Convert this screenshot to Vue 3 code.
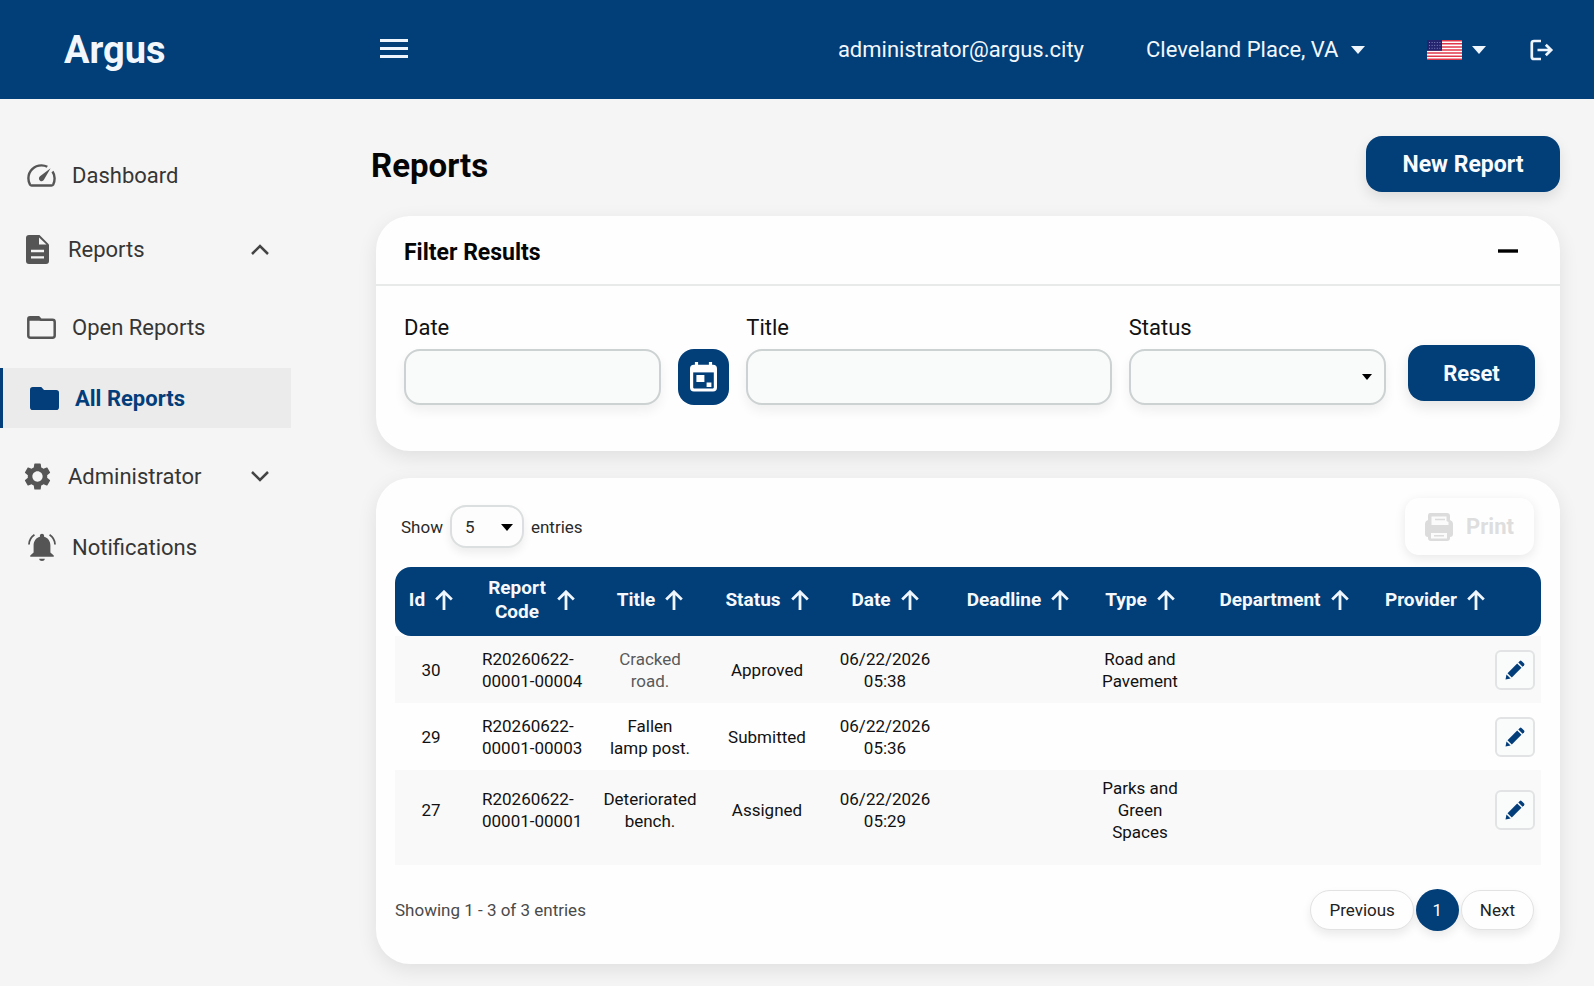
<template>
    <div class="page">
        <!-- HEADER -->
        <header class="header">
            <a class="logo" href="#">Argus</a>
            <button class="iconButton" type="button" aria-label="Toggle menu" v-on:click="menuOpen = !menuOpen">
                <svg width="28" height="21" viewBox="0 0 28 21">
                    <path d="M0 1.5H28M0 9.5H28M0 17.5H28" stroke="#eef5fd" stroke-width="3" />
                </svg>
            </button>
            <div class="headerRight">
                <span class="email">administrator@argus.city</span>
                <div class="location">
                    <select v-model="city" class="citySelect" aria-label="City">
                        <option>Cleveland Place, VA</option>
                    </select>
                    <svg width="14" height="8" viewBox="0 0 14 8"><path d="M0 0H14L7 8Z" fill="#eef5fd" /></svg>
                </div>
                <button class="iconButton language" type="button" aria-label="Language">
                    <svg width="35" height="20" viewBox="0 0 35 20">
                        <rect width="35" height="20" fill="#fff" />
                        <path v-for="n in 7" :key="n" :d="`M0 ${(n - 1) * 3.08 + 0.77}H35`" stroke="#e0364a" stroke-width="1.54" />
                        <rect width="15" height="10.8" fill="#24246e" />
                        <path d="M2 2.5H14M2 5.4H14M2 8.3H14" stroke="#7f86c0" stroke-width="1" stroke-dasharray="1 1.6" />
                    </svg>
                    <svg width="14" height="8" viewBox="0 0 14 8"><path d="M0 0H14L7 8Z" fill="#eef5fd" /></svg>
                </button>
                <button class="iconButton logout" type="button" aria-label="Log out">
                    <svg width="24" height="22" viewBox="0 0 24 22" fill="none" stroke="#eef5fd" stroke-width="2.7">
                        <path d="M11 2H4Q1.8 2 1.8 4V18Q1.8 20 4 20H11" />
                        <path d="M7.5 11H21M15.8 5.7L21.2 11L15.8 16.3" />
                    </svg>
                </button>
            </div>
        </header>

        <div class="body">
            <!-- SIDEBAR -->
            <nav class="sidebar" v-show="menuOpen">
                <a class="navItem first" href="#">
                    <span class="navIcon">
                        <svg width="29" height="23" viewBox="0 0 29 23">
                            <path d="M20.3 2.8C18.5 1.8 16.6 1.4 14.5 1.4C7.2 1.4 1.4 7 1.4 14.2C1.4 16.8 2 19 3 20.6Q3.6 21.5 4.6 21.5H24.4Q25.6 21.5 26.2 20.6C27.1 19 27.6 16.8 27.6 14.2C27.6 11.6 26.8 9.4 25.5 7.5" fill="none" stroke="#555" stroke-width="2.4" />
                            <path d="M23.6 4.2L17.2 15.3A2.7 2.7 0 1 1 13 12.3Z" fill="#555" />
                        </svg>
                    </span>
                    Dashboard
                </a>
                <button class="navItem group" type="button" v-on:click="reportsOpen = !reportsOpen">
                    <span class="navIcon">
                        <svg width="23" height="29" viewBox="0 0 23 29">
                            <path d="M3 0H13.5L23 9.5V26Q23 29 20 29H3Q0 29 0 26V3Q0 0 3 0Z" fill="#555" />
                            <path d="M13 2.5V9.5H20.5Z" fill="#f5f5f5" />
                            <path d="M5 16H18M5 22.3H18" stroke="#f5f5f5" stroke-width="2.3" />
                        </svg>
                    </span>
                    Reports
                    <svg class="chevron" width="18" height="11" viewBox="0 0 18 11">
                        <path d="M1 10L9 2L17 10" fill="none" stroke="#444" stroke-width="2.5" />
                    </svg>
                </button>
                <div class="submenu" v-if="reportsOpen">
                    <a class="navItem" href="#">
                        <span class="navIcon">
                            <svg width="29" height="23" viewBox="0 0 29 23">
                                <path d="M1.3 3V19.5Q1.3 21.7 3.5 21.7H25.5Q27.7 21.7 27.7 19.5V6Q27.7 3.8 25.5 3.8H14L11.6 1.3H3Q1.3 1.3 1.3 3Z" fill="none" stroke="#555" stroke-width="2.5" />
                                <path d="M1.5 1.5H11.5L14 4.8H1.5Z" fill="#555" />
                            </svg>
                        </span>
                        Open Reports
                    </a>
                    <a class="navItem active" href="#">
                        <span class="navIcon">
                            <svg width="29" height="23" viewBox="0 0 29 23">
                                <path d="M2.8 0H11.3L14 2.9H26.2Q29 2.9 29 5.7V20.2Q29 23 26.2 23H2.8Q0 23 0 20.2V2.8Q0 0 2.8 0Z" fill="#033e7b" />
                            </svg>
                        </span>
                        All Reports
                    </a>
                </div>
                <button class="navItem group" type="button">
                    <span class="navIcon">
                        <svg width="27" height="27" viewBox="2 2 20 20">
                            <path fill="#555" d="M19.14 12.94c.04-.3.06-.61.06-.94 0-.32-.02-.64-.07-.94l2.03-1.58c.18-.14.23-.41.12-.61l-1.92-3.32c-.12-.22-.37-.29-.59-.22l-2.39.96c-.5-.38-1.03-.7-1.62-.94l-.36-2.54c-.04-.24-.24-.41-.48-.41h-3.84c-.24 0-.43.17-.47.41l-.36 2.54c-.59.24-1.13.57-1.62.94l-2.39-.96c-.22-.08-.47 0-.59.22L2.74 8.87c-.12.21-.08.47.12.61l2.03 1.58c-.05.3-.09.63-.09.94s.02.64.07.94l-2.03 1.58c-.18.14-.23.41-.12.61l1.92 3.32c.12.22.37.29.59.22l2.39-.96c.5.38 1.03.7 1.62.94l.36 2.54c.05.24.24.41.48.41h3.84c.24 0 .44-.17.47-.41l.36-2.54c.59-.24 1.13-.56 1.62-.94l2.39.96c.22.08.47 0 .59-.22l1.92-3.32c.12-.22.07-.47-.12-.61l-2.01-1.58zM12 15.8c-2.1 0-3.8-1.7-3.8-3.8s1.7-3.8 3.8-3.8 3.8 1.7 3.8 3.8-1.7 3.8-3.8 3.8z" />
                        </svg>
                    </span>
                    Administrator
                    <svg class="chevron" width="18" height="11" viewBox="0 0 18 11">
                        <path d="M1 1L9 9L17 1" fill="none" stroke="#444" stroke-width="2.5" />
                    </svg>
                </button>
                <a class="navItem" href="#">
                    <span class="navIcon">
                        <svg width="28" height="28" viewBox="2 2 20 20">
                            <path fill="#555" d="M12 22c1.1 0 2-.6 2-1.6h-4c0 1 .9 1.6 2 1.6zm6-6v-5c0-3.07-1.64-5.64-4.5-6.32V4c0-.83-.67-1.5-1.5-1.5s-1.5.67-1.5 1.5v.68C7.63 5.36 6 7.92 6 11v5l-2.4 2v1h16.8v-1l-2.4-2z" />
                            <path fill="none" stroke="#555" stroke-width="1.3" d="M6.6 3.3C4.2 4.9 2.8 7 2.7 10.2M17.4 3.3C19.8 4.9 21.2 7 21.3 10.2" />
                        </svg>
                    </span>
                    Notifications
                </a>
            </nav>

            <main class="main">
                <div class="titleRow">
                    <h1>Reports</h1>
                    <button class="primary newReport" type="button">New Report</button>
                </div>

                <div class="cards">
                    <!-- FILTERS -->
                    <section class="card">
                        <div class="filterHeader">
                            <h2>Filter Results</h2>
                            <button class="iconButton" type="button" aria-label="Collapse" v-on:click="filtersOpen = !filtersOpen">
                                <svg width="20" height="20" viewBox="0 0 20 20"><path d="M0 10H20" stroke="#000" stroke-width="3.4" /></svg>
                            </button>
                        </div>
                        <form class="filters" v-if="filtersOpen" v-on:submit.prevent v-on:reset="resetFilters">
                            <div class="field dateField">
                                <label for="date">Date</label>
                                <input id="date" v-model="date" type="text">
                            </div>
                            <button class="primary calendar" type="button" aria-label="Pick a date">
                                <svg width="27" height="30" viewBox="0 0 27 30">
                                    <path d="M6.5 0V5M20.5 0V5" stroke="#fff" stroke-width="3.2" />
                                    <rect x="1.6" y="4.4" width="23.8" height="23.6" rx="2.4" fill="none" stroke="#fff" stroke-width="3.2" />
                                    <path d="M2 3.6H25V10.4H2Z" fill="#fff" />
                                    <path d="M6.4 13H14.4V20H6.4ZM16.6 20.6H21.4V25H16.6Z" fill="#fff" />
                                </svg>
                            </button>
                            <div class="field titleField">
                                <label for="title">Title</label>
                                <input id="title" v-model="title" type="text">
                            </div>
                            <div class="field statusField">
                                <label for="status">Status</label>
                                <div class="selectBox">
                                    <select id="status" v-model="status">
                                        <option value=""></option>
                                        <option>Approved</option>
                                        <option>Submitted</option>
                                        <option>Assigned</option>
                                    </select>
                                    <svg class="caret" width="10" height="6" viewBox="0 0 10 6"><path d="M0 0H10L5 6Z" /></svg>
                                </div>
                            </div>
                            <button class="primary reset" type="reset">Reset</button>
                        </form>
                    </section>

                    <!-- TABLE -->
                    <section class="card tableCard">
                        <div class="tools">
                            <label for="entries">Show</label>
                            <div class="selectBox">
                                <select id="entries" v-model="perPage" class="entries">
                                    <option>5</option>
                                    <option>10</option>
                                    <option>25</option>
                                </select>
                                <svg class="caret" width="12" height="7" viewBox="0 0 12 7"><path d="M0 0H12L6 7Z" /></svg>
                            </div>
                            <span>entries</span>
                            <button class="print" type="button" disabled>
                                <svg width="28" height="28" viewBox="0 0 28 28">
                                    <path d="M5 0H22Q25 0 25 3V7Q28 8 28 11V21Q28 24 25 24V25Q25 28 22 28H6Q3 28 3 25V24Q0 24 0 21V11Q0 8 3 7V3Q3 0 5 0Z" fill="#dcdcdc" />
                                    <path d="M6.5 3.5H21.5V8L23.5 9V12H6.5ZM6 20H22V25.5H6Z" fill="#fbfbfb" />
                                    <path d="M10 6.5H20M9 22.7H19" stroke="#dcdcdc" stroke-width="1.6" />
                                </svg>
                                Print
                            </button>
                        </div>

                        <table>
                            <colgroup>
                                <col v-for="col in columns" :key="col.key" :class="'col-' + col.key">
                                <col class="col-edit">
                            </colgroup>
                            <thead>
                                <tr>
                                    <th v-for="col in columns" :key="col.key">
                                        <button class="sort" type="button" v-on:click="sortBy(col.key)">
                                            <span>{{ col.label }}</span>
                                            <svg width="18" height="20" viewBox="0 0 18 20">
                                                <path d="M9 20V1.8M1.2 9.4L9 1.8L16.8 9.4" fill="none" stroke="#f0f6fd" stroke-width="2.8" />
                                            </svg>
                                        </button>
                                    </th>
                                    <th></th>
                                </tr>
                            </thead>
                            <tbody>
                                <tr v-for="report in reports" :key="report.id">
                                    <td>{{ report.id }}</td>
                                    <td class="code">{{ report.code }}</td>
                                    <td class="title" :class="{ muted: report.id === 30 }">{{ report.title }}</td>
                                    <td>{{ report.status }}</td>
                                    <td>{{ report.date }}</td>
                                    <td>{{ report.deadline }}</td>
                                    <td>{{ report.type }}</td>
                                    <td>{{ report.department }}</td>
                                    <td>{{ report.provider }}</td>
                                    <td>
                                        <button class="edit" type="button" aria-label="Edit report">
                                            <svg width="20" height="20" viewBox="0 0 20 20" fill="#033e7b">
                                                <path d="M14.8 0.9Q15.6 0.1 16.5 0.9L19.1 3.5Q19.9 4.4 19.1 5.2L17.6 6.7L13.3 2.4Z" />
                                                <path d="M12.2 3.5L16.5 7.8L6.8 17.5L2.5 13.2Z" />
                                                <path d="M1.5 14.4L5.6 18.5L0.5 19.5Z" />
                                            </svg>
                                        </button>
                                    </td>
                                </tr>
                            </tbody>
                        </table>

                        <div class="footer">
                            <span>Showing 1 - {{ reports.length }} of {{ reports.length }} entries</span>
                            <div class="pagination">
                                <button type="button">Previous</button>
                                <button class="current" type="button">1</button>
                                <button type="button">Next</button>
                            </div>
                        </div>
                    </section>
                </div>
            </main>
        </div>
    </div>
</template>


<script setup>
import { ref } from 'vue';

// menus
const menuOpen = ref(true)
const reportsOpen = ref(true)
const filtersOpen = ref(true)

// filters
const city = ref('Cleveland Place, VA')
const date = ref('')
const title = ref('')
const status = ref('')
const perPage = ref('5')

const columns = [
    { key: 'id', label: 'Id' },
    { key: 'code', label: 'Report Code' },
    { key: 'title', label: 'Title' },
    { key: 'status', label: 'Status' },
    { key: 'date', label: 'Date' },
    { key: 'deadline', label: 'Deadline' },
    { key: 'type', label: 'Type' },
    { key: 'department', label: 'Department' },
    { key: 'provider', label: 'Provider' },
]

const reports = ref([
    { id: 30, code: 'R20260622-00001-00004', title: 'Cracked\nroad.', status: 'Approved', date: '06/22/2026 05:38', type: 'Road and Pavement' },
    { id: 29, code: 'R20260622-00001-00003', title: 'Fallen\nlamp post.', status: 'Submitted', date: '06/22/2026 05:36', type: '' },
    { id: 27, code: 'R20260622-00001-00001', title: 'Deteriorated\nbench.', status: 'Assigned', date: '06/22/2026 05:29', type: 'Parks and Green Spaces' },
])

function resetFilters() {
    date.value = ''
    title.value = ''
    status.value = ''
}

function sortBy(key) {
    reports.value.sort((a, b) => String(a[key] || '').localeCompare(String(b[key] || '')))
}
</script>


<style>
body {
    background-color: #f5f5f5;
}
</style>

<style scoped>
* {
    box-sizing: border-box;
}

.page {
    min-height: 100vh;
    font-family: Roboto, 'Liberation Sans', sans-serif;
    color: #111;
}

button,
input,
select {
    font-family: inherit;
    font-size: inherit;
    color: inherit;
    margin: 0;
}

button {
    cursor: pointer;
}

svg {
    display: block;
    flex-shrink: 0;
}

h1,
h2 {
    margin: 0;
    padding-top: 2px;
    color: #050505;
}

/* header */
.header {
    display: flex;
    align-items: center;
    height: 99px;
    padding: 0 40px 0 64px;
    background-color: #023e78;
    color: #f2f7fd;
    font-size: 22px;
}

.logo {
    width: 316px;
    color: inherit;
    font-size: 38px;
    font-weight: 700;
    text-decoration: none;
}

.iconButton {
    display: flex;
    align-items: center;
    gap: 10px;
    padding: 0;
    border: none;
    background: none;
}

.headerRight {
    display: flex;
    align-items: center;
    gap: 62px;
    margin-left: auto;
}

.location {
    display: flex;
    align-items: center;
    gap: 12px;
}

.citySelect {
    appearance: none;
    padding: 0;
    border: none;
    background: none;
}

.logout {
    margin-left: -18px;
}

/* sidebar */
.body {
    display: flex;
    align-items: flex-start;
}

.sidebar {
    display: flex;
    flex-direction: column;
    gap: 11px;
    width: 291px;
    flex-shrink: 0;
    padding-top: 46px;
}

.navItem {
    display: flex;
    align-items: center;
    gap: 16px;
    width: 100%;
    height: 60px;
    padding: 0 22px 0 27px;
    border: none;
    background: none;
    color: #363636;
    font-size: 22px;
    text-decoration: none;
    white-space: nowrap;
}

.first {
    margin-bottom: 3px;
}

.group {
    padding-left: 23px;
}

.navIcon {
    display: flex;
    justify-content: center;
    width: 29px;
}

.chevron {
    margin-left: auto;
}

.submenu {
    display: flex;
    flex-direction: column;
    gap: 11px;
    margin: 7px 0;
}

.active {
    border-left: 3px solid #033e7b;
    background-color: #ebebeb;
    color: #033e7b;
    font-weight: 700;
}

/* main */
.main {
    flex: 1;
    min-width: 0;
    padding: 37px 34px 22px 80px;
}

.titleRow {
    display: flex;
    align-items: center;
    justify-content: space-between;
}

h1 {
    font-size: 33px;
}

h2 {
    font-size: 23px;
}

.primary {
    display: flex;
    align-items: center;
    justify-content: center;
    height: 56px;
    padding: 0;
    border: none;
    border-radius: 16px;
    background-color: #023e78;
    box-shadow: 0 6px 14px rgba(0, 0, 0, 0.1);
    color: #f8fbff;
    font-size: 22px;
    font-weight: 700;
}

.newReport {
    width: 194px;
    font-size: 23px;
}

.cards {
    display: flex;
    flex-direction: column;
    gap: 27px;
    padding: 24px 0 0 5px;
}

.card {
    border-radius: 34px;
    background-color: #fefefe;
    box-shadow: 0 6px 20px rgba(0, 0, 0, 0.09);
}

.filterHeader {
    display: flex;
    align-items: center;
    justify-content: space-between;
    height: 70px;
    padding: 2px 42px 0 28px;
    border-bottom: 2px solid #e8eaea;
}

.filters {
    display: flex;
    align-items: flex-end;
    gap: 17px;
    padding: 27px 25px 46px 28px;
}

.field {
    display: flex;
    flex-direction: column;
    gap: 6px;
    min-width: 0;
    font-size: 22px;
    line-height: 30px;
}

.dateField,
.statusField {
    flex: 257;
}

.titleField {
    flex: 365;
}

.field input,
.field select {
    width: 100%;
    height: 56px;
    padding: 0 16px;
    border: 2px solid #ccd1d1;
    border-radius: 16px;
    background-color: #f9fafa;
    box-shadow: 0 6px 12px rgba(0, 0, 0, 0.06);
}

.calendar {
    width: 51px;
    box-shadow: none;
}

.reset {
    width: 127px;
    margin: 0 0 4px 5px;
}

.selectBox {
    position: relative;
}

.selectBox select {
    appearance: none;
}

.caret {
    position: absolute;
    top: 50%;
    right: 14px;
    margin-top: -3px;
    pointer-events: none;
}

/* table */
.tableCard {
    padding: 20px 19px 33px;
}

.tools {
    display: flex;
    align-items: center;
    gap: 7px;
    padding: 0 7px 12px 6px;
    color: #2a2a2a;
    font-size: 17px;
}

.entries {
    width: 74px;
    height: 43px;
    padding: 0 13px;
    border: 2px solid #dcdfdf;
    border-radius: 16px;
    background-color: #fdfdfd;
    box-shadow: 0 5px 10px rgba(0, 0, 0, 0.07);
}

.tools .caret {
    right: 11px;
}

.print {
    display: flex;
    align-items: center;
    justify-content: center;
    gap: 13px;
    width: 129px;
    height: 57px;
    margin-left: auto;
    border: none;
    border-radius: 14px;
    background-color: #fefefe;
    box-shadow: 0 3px 12px rgba(0, 0, 0, 0.09);
    color: #dedede;
    font-size: 22px;
    font-weight: 700;
}

table {
    width: 100%;
    border-collapse: separate;
    border-spacing: 0;
    table-layout: fixed;
    font-size: 17px;
    line-height: 22px;
    text-align: center;
}

.col-id { width: 72px; }
.col-code { width: 128px; }
.col-title { width: 110px; }
.col-status { width: 124px; }
.col-date { width: 112px; }
.col-deadline { width: 154px; }
.col-type { width: 90px; }
.col-department { width: 198px; }
.col-provider { width: 104px; }
.col-edit { width: 54px; }

th {
    height: 69px;
    padding: 0 0 3px;
    background-color: #023e78;
}

th:first-child {
    border-radius: 16px 0 0 16px;
}

th:last-child {
    border-radius: 0 16px 16px 0;
}

.sort {
    display: flex;
    align-items: center;
    justify-content: center;
    gap: 10px;
    width: 100%;
    padding: 0;
    border: none;
    background: none;
    color: #f5f9fe;
    font-size: 19px;
    font-weight: 700;
    line-height: 24px;
}

/* keeps "Report Code" on two lines */
th:nth-child(2) .sort {
    padding: 0 20px;
}

td {
    height: 67px;
    padding: 0;
}

tbody tr:nth-child(odd) td {
    background-color: #f9f9f9;
}

tbody tr:last-child td {
    height: 95px;
    padding-bottom: 16px;
}

.code {
    padding-left: 15px;
    text-align: left;
}

.title {
    white-space: pre-line;
}

.muted {
    color: #5a5a5a;
}

.edit {
    display: flex;
    align-items: center;
    justify-content: center;
    width: 40px;
    height: 40px;
    margin-left: 8px;
    padding: 0;
    border: 2px solid #e2e3e4;
    border-radius: 6px;
    background-color: #fafbfb;
}

.footer {
    display: flex;
    align-items: center;
    justify-content: space-between;
    padding: 24px 7px 0 0;
    color: #4a4a4a;
    font-size: 17px;
}

.pagination {
    display: flex;
    align-items: center;
    gap: 2px;
}

.pagination button {
    height: 40px;
    padding: 0 18px;
    border: 1px solid #e2e2e2;
    border-radius: 20px;
    background-color: #fefefe;
    box-shadow: 0 5px 10px rgba(0, 0, 0, 0.08);
    color: #222;
}

.pagination .current {
    width: 43px;
    height: 42px;
    padding: 0;
    border: none;
    border-radius: 50%;
    background-color: #023e78;
    color: #fff;
}
</style>
